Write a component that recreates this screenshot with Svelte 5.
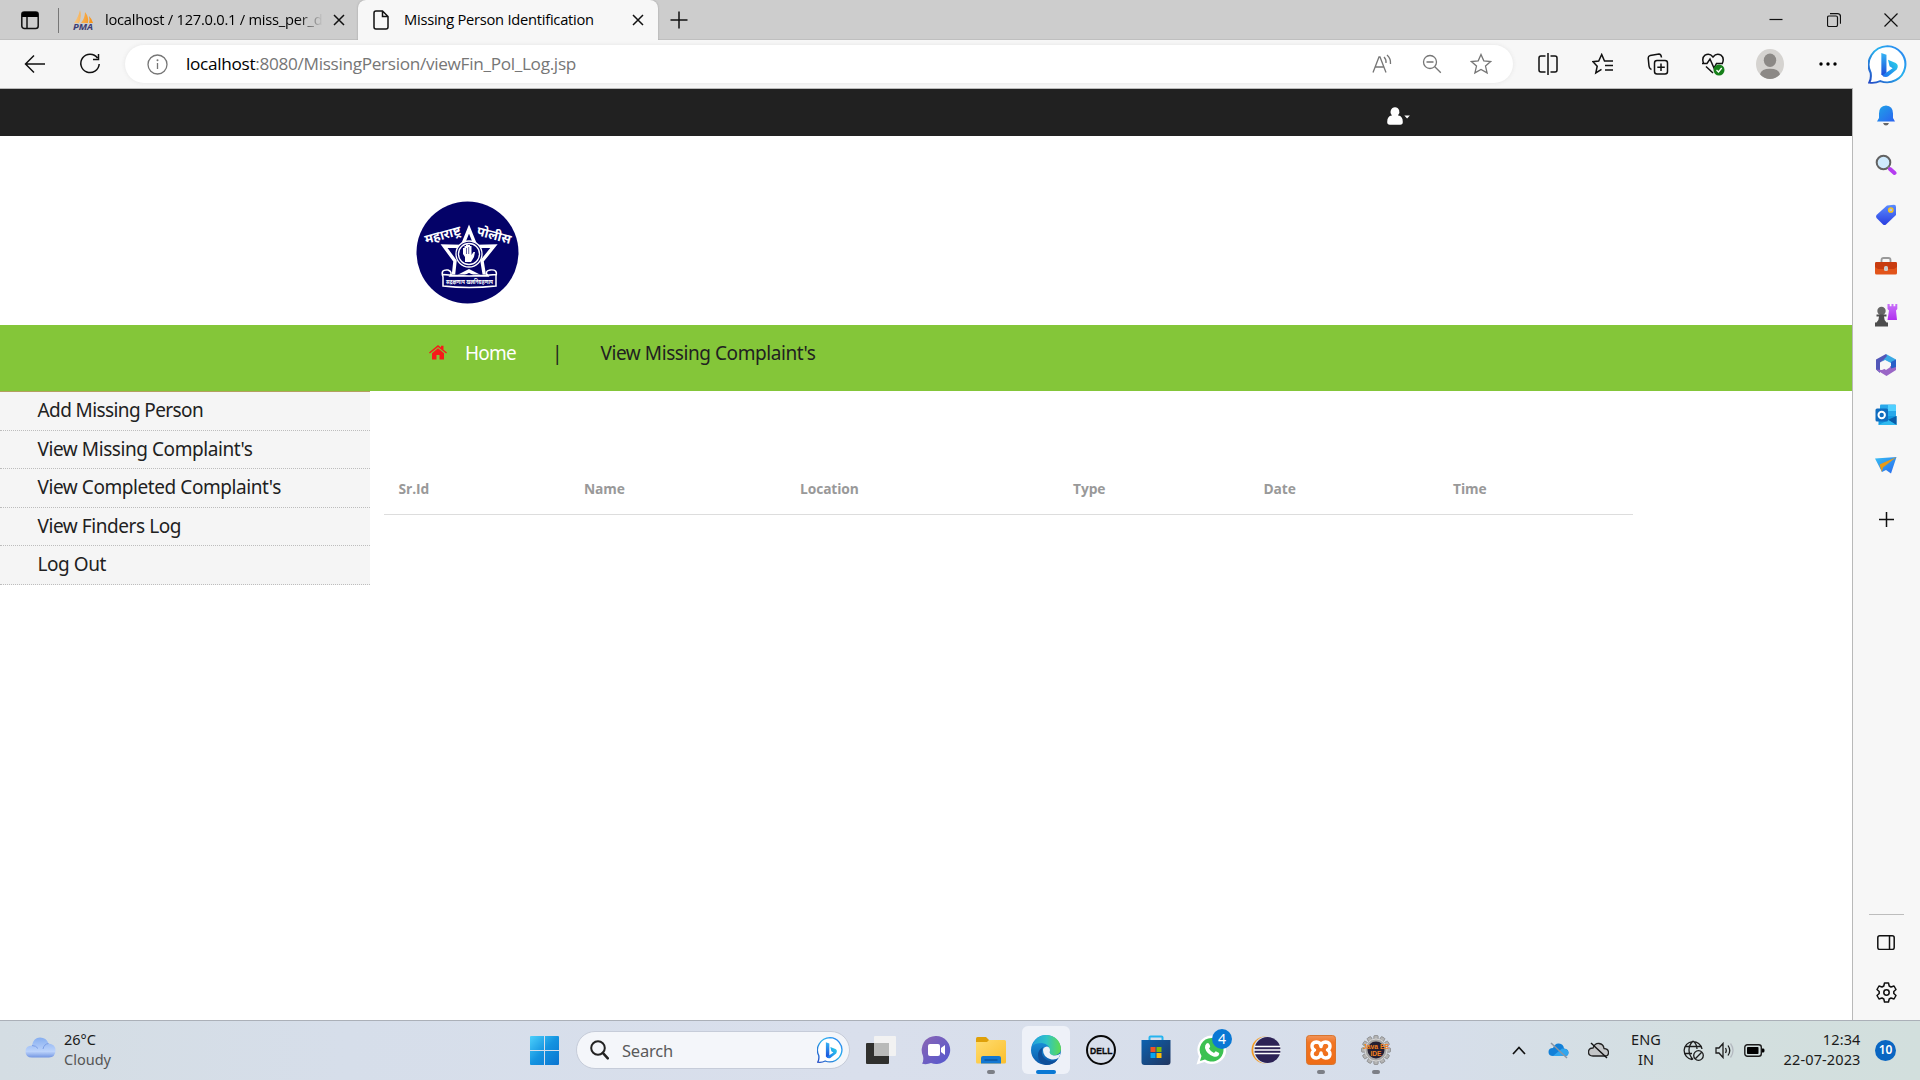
<script>
  const menu = ["Add Missing Person", "View Missing Complaint's", "View Completed Complaint's", "View Finders Log", "Log Out"];
  const columns = ["Sr.Id", "Name", "Location", "Type", "Date", "Time"];
  const rail = ["bing", "bell", "finder", "tag", "toolbox", "games", "m365", "outlook", "drop", "plus"];
  const pinned = [
    { name: "taskview" },
    { name: "chat" },
    { name: "folder", open: true },
    { name: "edge", active: true },
    { name: "dell" },
    { name: "store" },
    { name: "whatsapp", badge: 4 },
    { name: "eclipse" },
    { name: "xampp", open: true },
    { name: "javaee", open: true }
  ];
  const teeth = Array.from({ length: 12 }, (_, i) => i * 30);
</script>

{#snippet bing(size)}
  <svg width={size} height={size} viewBox="0 0 38 42" preserveAspectRatio="none">
    <path d="M19 1.2A17.8 19.5 0 1 1 12 38.8Q7 41.5 1.2 40.6Q3.4 36.5 2.6 30A19 20 0 0 1 19 1.2Z" fill="#fff" stroke="url(#bingRing)" stroke-width="2" />
    <path d="M13 8.5l5 2v19l-2.6 4.6-2.4-2.600z" fill="url(#bingStem)" />
    <path d="M19.5 16l7.5 3.5q3.5 2.5 1 7l-8.5 7.5q-3 1.5-5.5-1.5l10-7.5-3-2z" fill="url(#bingBowl)" />
  </svg>
{/snippet}

{#snippet cross(size)}
  <svg width={size} height={size} viewBox="0 0 12 12"><path d="M1 1l10 10M11 1L1 11" class="ln" /></svg>
{/snippet}

<svg class="defs" width="0" height="0">
  <defs>
    <linearGradient id="bingRing" x1="1" y1="0" x2="0" y2="1"><stop offset="0" stop-color="#2b7cf0" /><stop offset=".45" stop-color="#28b4ee" /><stop offset="1" stop-color="#2348c4" /></linearGradient>
    <linearGradient id="bingStem" x1="0" y1="0" x2="0" y2="1"><stop offset="0" stop-color="#35b5f5" /><stop offset="1" stop-color="#1b46d8" /></linearGradient>
    <linearGradient id="bingBowl" x1="1" y1="0" x2="0" y2="1"><stop offset="0" stop-color="#2bd5e8" /><stop offset="1" stop-color="#1b6cf0" /></linearGradient>
    <linearGradient id="bellFill" x1="0" y1="0" x2="1" y2="1"><stop offset="0" stop-color="#1ea5e8" /><stop offset="1" stop-color="#2b62f0" /></linearGradient>
    <linearGradient id="tagFill" x1="0" y1="0" x2="0" y2="1"><stop offset="0" stop-color="#5a8cff" /><stop offset="1" stop-color="#2a3ee0" /></linearGradient>
    <linearGradient id="winFill" x1="0" y1="0" x2="1" y2="1"><stop offset="0" stop-color="#4cd0fb" /><stop offset=".5" stop-color="#1493e0" /><stop offset="1" stop-color="#0a74d0" /></linearGradient>
    <linearGradient id="cloudFill" x1="0" y1="0" x2="0" y2="1"><stop offset="0" stop-color="#86aef0" /><stop offset=".7" stop-color="#bcd3fb" /><stop offset="1" stop-color="#7396e2" /></linearGradient>
    <linearGradient id="chatFill" x1="0" y1="0" x2="1" y2="1"><stop offset="0" stop-color="#8c66b4" /><stop offset="1" stop-color="#5257cf" /></linearGradient>
    <linearGradient id="folderFill" x1="0" y1="0" x2="1" y2="1"><stop offset="0" stop-color="#ffdc70" /><stop offset="1" stop-color="#fbbf2c" /></linearGradient>
    <linearGradient id="edgeTop" x1="0" y1="0" x2="1" y2="0"><stop offset="0" stop-color="#219fdc" /><stop offset=".5" stop-color="#2fc3c7" /><stop offset="1" stop-color="#5fdc4f" /></linearGradient>
    <linearGradient id="edgeBody" x1="0" y1="0" x2="0" y2="1"><stop offset="0" stop-color="#1ca0e6" /><stop offset="1" stop-color="#0c56a8" /></linearGradient>
    <linearGradient id="storeFill" x1="0" y1="0" x2="1" y2="1"><stop offset="0" stop-color="#0c62b0" /><stop offset="1" stop-color="#213660" /></linearGradient>
    <linearGradient id="xamppFill" x1="0" y1="0" x2="0" y2="1"><stop offset="0" stop-color="#f0945a" /><stop offset=".25" stop-color="#f27421" /><stop offset="1" stop-color="#ee6c16" /></linearGradient>
    <linearGradient id="planeFill" x1="0" y1="0" x2="1" y2="1"><stop offset="0" stop-color="#38c0f4" /><stop offset="1" stop-color="#2766ee" /></linearGradient>
    <linearGradient id="rookFill" x1="0" y1="0" x2="0" y2="1"><stop offset="0" stop-color="#c870fa" /><stop offset="1" stop-color="#b030ee" /></linearGradient>
    <linearGradient id="sailFill" x1="0" y1="0" x2="1" y2="0"><stop offset="0" stop-color="#f6c885" /><stop offset="1" stop-color="#f78f10" /></linearGradient>
  </defs>
</svg>

<div class="screen">
  <header class="tabs">
    <div class="tab-menu">
      <svg width="20" height="20" viewBox="0 0 20 20"><rect x="1.8" y="2" width="16.4" height="16.4" rx="2.5" class="ln" /><path d="M2 7V4q0-2 2-2h12q2 0 2 2v3z" fill="#000" /><path d="M7 7v11" class="ln" /></svg>
    </div>
    <div class="tab idle">
      <svg width="22" height="22" viewBox="0 0 22 22">
        <path d="M8 1q2 6-1 13L2 14q4-5 6-13zM13 3q4 5 3 11H9q4-5 4-11zM17 7q3 3 4 7h-4q1-3 0-7z" fill="url(#sailFill)" />
        <text x="1" y="21" class="pma" textLength="20" lengthAdjust="spacingAndGlyphs">PMA</text>
      </svg>
      <span class="tab-text fade">localhost / 127.0.0.1 / miss_per_d</span>
      {@render cross(12)}
    </div>
    <div class="tab active">
      <svg width="16" height="20" viewBox="0 0 16 20"><path d="M1 3q0-2 2-2h6.5L15 6.500V17q0 2-2 2H3q-2 0-2-2zM9.500 1v5.500H15" class="ln" /></svg>
      <span class="tab-text">Missing Person Identification</span>
      {@render cross(12)}
    </div>
    <svg class="new-tab" width="18" height="18" viewBox="0 0 18 18"><path d="M9 .5v17M.5 9h17" class="ln" /></svg>
    <div class="window">
      <svg width="14" height="14" viewBox="0 0 14 14"><path d="M.5 6.500h13" class="ln thin" /></svg>
      <svg width="14" height="14" viewBox="0 0 14 14"><rect x=".5" y="3" width="10" height="10.500" rx="1.500" class="ln thin" /><path d="M3 .7h7.500q3 0 3 3v7" class="ln thin" /></svg>
      <svg width="14" height="14" viewBox="0 0 14 14"><path d="M.5.5l13 13M13.500.5L.5 13.500" class="ln thin" /></svg>
    </div>
  </header>

  <div class="below">
    <div class="browser">
      <div class="toolbar">
        <div class="btn"><svg width="22" height="20" viewBox="0 0 22 20"><path d="M21 10H1.500M10 1.500L1.500 10l8.500 8.500" class="ln" /></svg></div>
        <div class="btn"><svg width="22" height="22" viewBox="0 0 22 22"><path d="M18.500 5A9.200 9.200 0 1 0 20.200 11M19.500 1v5.500H14" class="ln" /></svg></div>
        <div class="omnibox">
          <svg width="21" height="21" viewBox="0 0 21 21"><circle cx="10.500" cy="10.500" r="9.500" class="ln gray" /><path d="M10.500 9v6" class="ln gray" /><circle cx="10.500" cy="6.300" r="1" fill="#767676" /></svg>
          <span class="url"><b>localhost</b>:8080/MissingPersion/viewFin_Pol_Log.jsp</span>
          <div class="btn"><svg width="20" height="20" viewBox="0 0 20 20"><path d="M1 18.500L7 3h1l6 15.500M3.200 13h8.600M12 3q2.500 2.500 2 6M15 1q4 3.500 3.500 9" class="ln gray" /></svg></div>
          <div class="btn"><svg width="20" height="20" viewBox="0 0 20 20"><circle cx="8" cy="8" r="6.500" class="ln gray" /><path d="M4.500 8h7M12.800 12.800l6 6" class="ln gray" /></svg></div>
          <div class="btn"><svg width="22" height="22" viewBox="0 0 22 22"><path d="M11 1.500l2.800 6.300 6.900.7-5.200 4.600 1.600 6.800L11 16.400l-6.100 3.500 1.600-6.800L1.300 8.500l6.900-.7z" class="ln gray" /></svg></div>
        </div>
        <div class="btn"><svg width="20" height="22" viewBox="0 0 20 22"><path d="M7.500 3H3Q1 3 1 5v12q0 2 2 2h4.500M12.500 3H17q2 0 2 2v12q0 2-2 2h-4.500M10 0v22" class="ln" /></svg></div>
        <div class="btn"><svg width="22" height="22" viewBox="0 0 22 22"><path d="M9.500 16.300l-5.700 3.700 1.400-6.800L1 8.700 6.700 8 9.700 1.500 12.500 8H21M13 12.500h8M13 17h8" class="ln" /></svg></div>
        <div class="btn"><svg width="22" height="22" viewBox="0 0 22 22"><rect x="7.500" y="7.500" width="13" height="13.500" rx="2.500" class="ln" /><path d="M14 10.500v7.500M10.300 14.200h7.500M4.500 16.500Q2.500 16 2 13L1.200 5q0-2 2-2.500L12 1q2 0 2.500 3.500" class="ln" /></svg></div>
        <div class="btn"><svg width="24" height="24" viewBox="0 0 24 24"><path d="M2.500 11Q.5 6 4 3.200 8.500.5 12 5q3.500-4.500 8-1.800 3.500 2.800 1.500 7.800M1 11.500h5L9 7l4 9 2.500-4.500H22M5 14.500l7 6.500" class="ln" /><circle cx="18" cy="18" r="5.500" fill="#16801a" /><path d="M15.500 18l2 2 3.200-4" stroke="#fff" stroke-width="1.300" fill="none" /></svg></div>
        <div class="btn profile"><svg width="28" height="30" viewBox="0 0 28 28" preserveAspectRatio="none"><circle cx="14" cy="14" r="14" fill="#d5d3d0" /><circle cx="14" cy="10.500" r="6.200" fill="#8c8986" /><path d="M4 23.500q1.500-5 10-5t10 5q-4 4.500-10 4.500T4 23.500z" fill="#8c8986" /></svg></div>
        <div class="btn more"><svg width="18" height="4" viewBox="0 0 18 4"><circle cx="2" cy="2" r="1.700" /><circle cx="9" cy="2" r="1.700" /><circle cx="16" cy="2" r="1.700" /></svg></div>
      </div>

      <main>
        <div class="topbar">
          <svg width="24" height="18" viewBox="0 0 24 18"><path d="M8 .3a4.400 4.600 0 0 1 3 8l.3.200q4.500.5 4.500 6.500 0 2.700-2.500 2.700h-10.600Q.2 17.700.2 15q0-6 4.500-6.500l.3-.2a4.400 4.600 0 0 1 3-8zM17.300 8.500h5.600l-2.800 3z" fill="#fff" /></svg>
        </div>
        <div class="brand">
          <svg width="103" height="103" viewBox="0 0 103 103">
            <circle cx="51.500" cy="51.500" r="51" fill="#040268" />
            <g fill="#fff" class="hindi">
              <text transform="translate(10 43) rotate(-15)" font-size="13" textLength="37" lengthAdjust="spacingAndGlyphs">महाराष्ट्र</text>
              <text transform="translate(60 34) rotate(15)" font-size="13" textLength="35" lengthAdjust="spacingAndGlyphs">पोलीस</text>
            </g>
            <path d="M53 28l7 17.500 18-.5-12 15 3 18-16-8-16 8 2-18-11-15 18 .5z" fill="none" stroke="#fff" stroke-width="3.400" />
            <circle cx="53" cy="53" r="13" fill="#040268" stroke="#fff" stroke-width="1.300" />
            <circle cx="53" cy="53" r="10.500" fill="none" stroke="#fff" stroke-width="1.300" />
            <path d="M49 61v-5l-2-3v-6h1.500v-2H50v-1.500h2V44h2v1h1.500v9l2-3h1.500l-1 5-3 5z" fill="#fff" />
            <path d="M50.500 47v6M52.700 46v7" stroke="#040268" stroke-width=".6" />
            <path d="M27 76q-3-8 5-7 5 2 2 6h38q-4-5 2-6 8-1 6 6v10q-27 3-53 0zM27 73.500q26 3 53 0" fill="#040268" stroke="#fff" stroke-width="1.500" />
            <text x="30" y="83" font-size="6.500" fill="#fff" class="hindi" textLength="47" lengthAdjust="spacingAndGlyphs">सद्रक्षणाय खलनिग्रहणाय</text>
          </svg>
        </div>
        <nav>
          <svg width="18" height="15" viewBox="0 0 18 15"><path d="M9 3.300l6 5v6.200h-4.500V10h-3v4.500H3V8.300zM9 0l3 2.500V.7h2.500v4L18 7.600l-.9 1L9 1.900.9 8.600l-.9-1z" fill="#f71a1a" /></svg>
          <span class="home">Home</span>
          <span class="bar">|</span>
          <span>View Missing Complaint's</span>
        </nav>
        <div class="body">
          <ul>
            {#each menu as item}<li>{item}</li>{/each}
          </ul>
          <div class="table">
            {#each columns as column}<span>{column}</span>{/each}
          </div>
        </div>
      </main>
    </div>

    <aside>
      {#each rail as name}
        <div class="rail-slot {name}">
          {#if name === "bing"}
            {@render bing(39)}
          {:else if name === "bell"}
            <svg width="18" height="21" viewBox="0 0 18 21"><path d="M9 .5q7 .5 7 8V13l2 3.500H0L2 13V8.500Q2 1 9 .5z" fill="url(#bellFill)" /><path d="M6 18h6q-1 2.500-3 2.500T6 18z" fill="#666" /></svg>
          {:else if name === "finder"}
            <svg width="22" height="22" viewBox="0 0 22 22"><circle cx="8.500" cy="8.500" r="6.800" fill="#cfeafd" stroke="#626262" stroke-width="2" /><path d="M13 13l2 2" stroke="#888" stroke-width="2" /><path d="M15 15l4.500 4" stroke="#b53cf0" stroke-width="4" stroke-linecap="round" /></svg>
          {:else if name === "tag"}
            <svg width="22" height="22" viewBox="0 0 22 22"><path d="M12 1.500L19 .8q2 0 2 2V11L11 20.500q-1.500 1-3 0L1.500 14q-1-1.500 0-3z" fill="url(#tagFill)" /><circle cx="15.800" cy="6" r="2.100" fill="#a9bcff" stroke="#f7c51d" stroke-width="1.500" /></svg>
          {:else if name === "toolbox"}
            <svg width="24" height="20" viewBox="0 0 24 20"><path d="M7.500 7V5q0-2 2-2h5q2 0 2 2v2" fill="none" stroke="#999" stroke-width="1.800" /><rect x="1" y="7" width="22" height="12.500" rx="1.500" fill="#e2541a" /><path d="M1 8.500Q1 7 2.500 7h19Q23 7 23 8.500V12l-3 2H4l-3-2z" fill="#c83c10" /><rect x="10" y="11" width="4" height="5" rx="1.500" fill="#ccc" /></svg>
          {:else if name === "games"}
            <svg width="24" height="24" viewBox="0 0 24 24"><path d="M13.500 1h2.200v2.200h1.800V1h2v2.200h1.800V1h2v5l-1.300 1.500L23 17h-9.500l1.500-9.500L13.500 6z" fill="url(#rookFill)" /><circle cx="7.500" cy="8" r="4.200" fill="#666" /><path d="M2.500 11.500h10v2H10q0 4 2.500 6h1.500V23.500H1V19.500h1.500q2.500-2 2.500-6H2.500z" fill="#4d4d4d" /></svg>
          {:else if name === "m365"}
            <svg width="22" height="24" viewBox="0 0 22 24"><path d="M11 1L1 6.500v10l4 3.500V9.500L14 4z" fill="#5257b8" /><path d="M11 1l10 5.500V14l-5-4-6-3-3 1.500L12 3z" fill="#3aa9e4" /><path d="M21 8v9l-9.500 6L1 16.500l6 .5 9-4z" fill="#9a66c6" /><path d="M21 6.500V14l-5 1.500V9z" fill="#285fc8" /><path d="M10.500 7.500l4.500 2.800v4l-4 2.700-4-2.700v-4z" fill="#f7f7f7" /></svg>
          {:else if name === "outlook"}
            <svg width="22" height="22" viewBox="0 0 22 22"><rect x="5" y=".5" width="16" height="12" rx="1" fill="#28a8ea" /><path d="M13 1h8v6h-8z" fill="#50d0ff" /><path d="M3.500 12H21.500v9H3.500z" fill="#1499e0" /><path d="M21.500 12v9l-9-5z" fill="#0a5ca8" /><path d="M21.500 21h-18l10-5z" fill="#30baf0" /><rect x=".5" y="4.500" width="12.500" height="13" rx="1.500" fill="#0f6cbf" /><circle cx="6.700" cy="11" r="3.200" fill="none" stroke="#fff" stroke-width="2" /></svg>
          {:else if name === "drop"}
            <svg width="22" height="18" viewBox="0 0 22 18"><path d="M0 2.500L21.500 1 16 17.500l-5-3.500-4 2z" fill="url(#planeFill)" /><path d="M21.500 1L4.500 8.500 6.800 16 8 11.500z" fill="#e99a18" /></svg>
          {:else}
            <svg width="15" height="15" viewBox="0 0 15 15"><path d="M7.500 0v15M0 7.500h15" class="ln" /></svg>
          {/if}
        </div>
      {/each}
      <div class="rail-foot">
        <svg width="18" height="15" viewBox="0 0 18 15"><rect x=".8" y=".8" width="16.400" height="13.600" rx="2" class="ln" /><path d="M12.500 1v13" class="ln" /></svg>
        <svg width="21" height="21" viewBox="0 0 21 21"><path d="M8.500 1h4l.7 3 1.800 1 3-1 2 3.500-2.200 2v2l2.200 2-2 3.500-3-1-1.800 1-.7 3h-4l-.7-3-1.800-1-3 1-2-3.500 2.200-2v-2L1 7.500 3 4l3 1 1.800-1z" class="ln" stroke-linejoin="round" /><circle cx="10.500" cy="10.500" r="2.700" class="ln" /></svg>
      </div>
    </aside>
  </div>

  <footer>
    <div class="weather">
      <svg width="31" height="21" viewBox="0 0 31 21"><path d="M7 20.500q-6.500 0-6.500-6T7 8.500Q8.500.5 15 .5t8.500 6q7 .5 7 7t-6.500 7z" fill="url(#cloudFill)" /><path d="M7 8.500q4 0 6 3M18 12q1-5 5.500-5.500" fill="none" stroke="#7d9fe6" /></svg>
      <div class="lines"><span>26°C</span><span class="dim">Cloudy</span></div>
    </div>
    <svg class="start" width="29" height="29" viewBox="0 0 29 29"><path d="M1 0h13v14H0V1q0-1 1-1zM15 0h13q1 0 1 1v13H15zM0 15h14v14H1q-1 0-1-1zM15 15h14v13q0 1-1 1H15z" fill="url(#winFill)" /></svg>
    <div class="search">
      <svg width="19" height="20" viewBox="0 0 19 20"><circle cx="8" cy="8" r="6.800" fill="none" stroke="#222" stroke-width="2" /><path d="M12.800 12.800l5 5.500" stroke="#222" stroke-width="2.500" stroke-linecap="round" /></svg>
      <span>Search</span>
      {@render bing(26)}
    </div>
    <div class="pins">
      {#each pinned as app}
        <div class="pin" class:active={app.active} class:open={app.open}>
          <svg width="30" height="30" viewBox="0 0 30 30">
            {#if app.name === "taskview"}
              <rect x="0" y="8" width="23" height="21" rx="1" fill="#30302e" /><rect x="8" y="1" width="22" height="20" rx="1" fill="#f2f2f2" /><path d="M8 8h15v13H8z" fill="#b9bab9" />
            {:else if app.name === "chat"}
              <path d="M15 1a14 14 0 1 1-5 27Q5 30 1 28.500 3 26 2 21A14 14 0 0 1 15 1z" fill="url(#chatFill)" /><rect x="7" y="9" width="12" height="12" rx="2" fill="#fff" /><path d="M20 13l4-3v10l-4-3z" fill="#fff" />
            {:else if app.name === "folder"}
              <path d="M0 3.500Q0 2 1.500 2H10l3 3v4H0z" fill="#dfa009" /><path d="M0 7h11l2-2h15.500Q30 5 30 6.500V27q0 1.500-1.500 1.500h-27Q0 28.500 0 27z" fill="url(#folderFill)" /><path d="M5 28.500V23q0-2 2-2h16q2 0 2 2v5.500z" fill="#1478d2" /><path d="M8.500 25h13" stroke="#0b4d91" stroke-width="1.200" />
            {:else if app.name === "edge"}
              <circle cx="15" cy="15" r="15" fill="url(#edgeBody)" /><path d="M1 11Q5 0 15.500 0 28 1 30 13q0 7-7 7.500-5.500-.5-4-3.500Q19 9 11 8 4 8 1 11z" fill="url(#edgeTop)" /><path d="M12 12q-4 10 6 14 5 1.500 9-2Q23 30 15 30 7 28 7 20q0-5 5-8z" fill="#0f4f9a" /><path d="M12 15q0-3 4-3.500 3 .5 3 4-1.500 4 3.500 5 4 .5 7-2l-1.500 4q-4 3-9 1.500-7-2.500-7-9z" fill="#eef1f8" />
            {:else if app.name === "dell"}
              <circle cx="15" cy="15" r="14" fill="none" stroke="#090909" stroke-width="2" /><text x="4" y="18.500" class="dell" textLength="22.500" lengthAdjust="spacingAndGlyphs">DELL</text>
            {:else if app.name === "store"}
              <path d="M8.500 7V2.500q0-1 1-1h11q1 0 1 1V7" fill="none" stroke="#26b4ef" stroke-width="2" /><path d="M.5 5h29v22q0 3-3 3h-23q-3 0-3-3z" fill="url(#storeFill)" /><path d="M9.500 12h5v5h-5z" fill="#f35325" /><path d="M15.500 12h5v5h-5z" fill="#81bc06" /><path d="M9.500 18h5v5h-5z" fill="#05a6f0" /><path d="M15.500 18h5v5h-5z" fill="#ffba08" />
            {:else if app.name === "whatsapp"}
              <path d="M15.500.5A14.300 14.300 0 1 1 8.500 27L.5 29.500 3 21.500A14.300 14.300 0 0 1 15.500.5z" fill="#fff" /><path d="M15.500 3A11.800 11.800 0 1 1 9 24.500L4 26l1.500-5A11.800 11.800 0 0 1 15.500 3z" fill="#3cc152" /><path d="M10.500 8.500q2-1.500 3 1l.7 1.800q0 1-1.200 2.200 1.500 3 5 4.500l1.700-1.700 3 1.400q1.300.8-.2 2.800-2 2-5 1-7-2.500-8.500-8.500-.3-3 1.500-4.500z" fill="#fff" />
            {:else if app.name === "eclipse"}
              <circle cx="14" cy="15" r="13.500" fill="#f79b20" /><circle cx="16" cy="15" r="13.800" fill="#d8dfeb" /><circle cx="16.500" cy="15" r="13" fill="#2c2255" /><path d="M3.500 11.500h26M3 15h27M3.500 18.500h26" stroke="#fff" stroke-width="1.600" />
            {:else if app.name === "xampp"}
              <rect x=".5" y=".5" width="29" height="29" rx="3" fill="url(#xamppFill)" stroke="#d8752f" /><path d="M15 11.500Q14.500 7 10.500 7 6 7.500 6 11q0 3 2.500 4Q6 16 6 19.500q.5 3.500 4.500 3.500 4-.5 4.500-5 .5 4.500 4.500 5 4 0 4.500-3.500 0-3.500-2.500-4.500 2.500-1 2.500-4 0-3.500-4.500-4-4 0-4.500 4.500z" fill="none" stroke="#fff" stroke-width="3.400" stroke-linejoin="round" />
            {:else}
              {#each teeth as angle}<rect x="12.800" y=".5" width="4.400" height="6" rx="1" fill="#b4b4b4" stroke="#777" stroke-width=".6" transform="rotate({angle} 15 15)" />{/each}
              <circle cx="15" cy="15" r="11" fill="#a6a6a6" stroke="#d8d8d8" /><circle cx="15" cy="15" r="8.500" fill="#241f32" />
              <text x="2" y="14" class="java" textLength="26" lengthAdjust="spacingAndGlyphs">Java EE</text><text x="9.500" y="20.500" class="java" textLength="11" lengthAdjust="spacingAndGlyphs">IDE</text>
            {/if}
          </svg>
          {#if app.badge}<span class="badge">{app.badge}</span>{/if}
        </div>
      {/each}
    </div>
    <div class="tray">
      <svg width="14" height="9" viewBox="0 0 14 9"><path d="M1 8l6-6.500L13 8" fill="none" stroke="#111" stroke-width="1.700" /></svg>
      <svg class="drive" width="21" height="17" viewBox="0 0 21 17"><path d="M5 14q-4.500 0-4.500-4T5 6Q7 1 11 1.500q4.500.5 5 5 4.500.5 4.500 4T17 14z" fill="#1380d8" /><path d="M5 14l9-7.500q6 0 6.500 4Q20.500 14 17 14z" fill="#30a5ee" /><path d="M3 1l16 15" stroke="#8b95a3" stroke-width="1.500" /></svg>
      <svg width="21" height="17" viewBox="0 0 21 17"><path d="M5 14q-4.500 0-4.500-4T5 6Q7 1 11 1.500q4.500.5 5 5 4.500.5 4.500 4T17 14z" fill="#c4c6c8" stroke="#222" stroke-width="1.300" /><path d="M3 1l16 15" stroke="#111" stroke-width="1.400" /></svg>
      <div class="lines lang"><span>ENG</span><span>IN</span></div>
      <svg width="21" height="21" viewBox="0 0 21 21"><g fill="none" stroke="#1c1c1c" stroke-width="1.300"><path d="M9 19.500A9 9 0 1 1 19 9M10 1Q6 5 6 10t4 9.500M10 1q4 3 4 8M2 6.500h16M2 13.500h7" /><circle cx="15.500" cy="15.500" r="4.800" /><path d="M12.300 18.700l6.400-6.400" /></g></svg>
      <svg class="speaker" width="20" height="17" viewBox="0 0 20 17"><g fill="none" stroke="#1c1c1c" stroke-width="1.300"><path d="M1 6h3l4-4.500v14L4 11H1zM10.500 6q1.500 2.500 0 5M13 3.500q3.500 5 0 10" /><path d="M15.500 1.500q5 7 0 14" stroke="#b4b9c0" /></g></svg>
      <svg width="21" height="13" viewBox="0 0 21 13"><rect x=".8" y=".8" width="16.500" height="11.400" rx="2.500" fill="none" stroke="#1c1c1c" stroke-width="1.400" /><rect x="3" y="3" width="11.500" height="7" rx=".8" /><path d="M18 4.500h1.500q1 0 1 2t-1 2H18z" /></svg>
      <div class="lines clock"><span>12:34</span><span>22-07-2023</span></div>
      <span class="count">10</span>
    </div>
  </footer>
</div>

<style>
  :global(body) { margin: 0; overflow: hidden; }
  .defs { position: absolute; }
  .screen { width: 1920px; height: 1080px; display: flex; flex-direction: column; background: #fff; font-family: "Open Sans", "Noto Sans", sans-serif; color: #000; white-space: nowrap; }
  svg { display: block; flex: none; }
  .ln { fill: none; stroke: #111; stroke-width: 1.5; }
  .thin { stroke-width: 1.2; }
  .gray { stroke: #767676; stroke-width: 1.3; }

  .tabs { height: 40px; display: flex; align-items: center; background: #cdcdcd; box-shadow: inset 0 -1px #bfbfbf; }
  .tab-menu { width: 59px; height: 25px; box-sizing: border-box; padding-left: 20px; display: flex; align-items: center; border-right: 1px solid #777; }
  .tab { display: flex; align-items: center; height: 40px; box-sizing: border-box; }
  .idle { width: 299px; padding-left: 13px; }
  .idle .tab-text { width: 218px; margin: 0 10px 0 11px; }
  .tab-text { font-size: 14.7px; letter-spacing: -.25px; overflow: hidden; line-height: 22px; padding-bottom: 2px; }
  .fade { mask-image: linear-gradient(90deg, #000 88%, transparent); }
  .active.tab { width: 300px; padding-left: 15px; background: #f7f7f7; border-radius: 8px 8px 0 0; box-shadow: 0 0 2px #999; clip-path: inset(0 -4px 0 -4px); }
  .active .tab-text { width: 218px; margin: 0 10px 0 15px; }
  .new-tab { margin-left: 12px; }
  .window { margin-left: auto; display: flex; gap: 43.5px; padding-right: 22px; }

  .below { height: 980px; display: flex; background: #f7f7f7; }
  .browser { width: 1852px; display: flex; flex-direction: column; }
  .toolbar { height: 48px; display: flex; align-items: center; padding-left: 7px; }
  .btn { width: 55px; flex: none; display: flex; justify-content: center; }
  .profile { width: 60px; }
  .more { width: 55px; }
  .omnibox { width: 1388px; height: 38px; box-sizing: border-box; margin: 0 7px 0 8px; padding: 0 7px 0 22px; display: flex; align-items: center; background: #fff; border-radius: 19px; box-shadow: 0 0 4px #e4e4e4; flex: none; }
  .omnibox .btn { width: 49.5px; }
  .url { flex: 1; margin-left: 18px; padding-bottom: 2px; font-size: 17.2px; letter-spacing: -.31px; color: #767676; }
  .url b { font-weight: 400; color: #000; }

  main { flex: 1; background: #fff; box-shadow: inset 0 1px #b9b9b9; border-right: 1px solid #b9b9b9; margin-right: -1px; }
  .topbar { height: 47px; margin-top: 1px; background: #212121; display: flex; padding: 18px 0 0 1387px; box-sizing: border-box; }
  .brand { height: 189px; box-sizing: border-box; padding: 65px 0 0 416px; }
  .hindi { font-family: "Noto Sans Devanagari", "Noto Sans", sans-serif; font-weight: 700; }
  nav, li { font-family: "Noto Sans", sans-serif; font-size: 19px; letter-spacing: -.43px; color: #212121; }
  nav { height: 66px; box-sizing: border-box; padding: 15px 0 0 429px; display: flex; align-items: flex-start; background: #84c639; line-height: 26px; }
  nav svg { margin-top: 5px; }
  .home { width: 87px; margin-left: 18px; color: #fff; letter-spacing: -.8px; }
  .bar { width: 48.5px; }
  .body { display: flex; align-items: flex-start; }
  ul { width: 370px; margin: 0; padding: 0; list-style: none; background: #f5f5f5; border-top: 1px solid #b3a05f; box-sizing: border-box; }
  li { height: 38.6px; box-sizing: border-box; padding-left: 37.5px; border-bottom: 1px dotted #bdbdbd; line-height: 36px; }
  li:first-child { letter-spacing: -.6px; }
  .table { width: 1249px; height: 124px; box-sizing: border-box; margin-left: 14px; padding: 88px 0 0 14.500px; display: grid; grid-template-columns: 185.5px 216px 273px 190.5px 189.5px 1fr; border-bottom: 1px solid #ddd; color: #999; font-size: 13.8px; font-weight: 700; line-height: 20px; letter-spacing: -.1px; }

  aside { flex: 1; display: flex; flex-direction: column; align-items: center; }
  .rail-slot { height: 50px; display: flex; align-items: center; justify-content: center; flex: none; }
  .rail-slot.bing { box-sizing: border-box; padding: 0 0 2px 2px; }
  .rail-slot.plus { height: 58px; }
  .rail-foot { width: 35px; margin-top: auto; margin-bottom: 17px; padding-top: 20px; display: flex; flex-direction: column; align-items: center; gap: 32px; border-top: 1px solid #bdbdbd; }

  footer { height: 60px; box-sizing: border-box; padding-bottom: 1px; display: flex; align-items: center; border-top: 1px solid #abb0b8; background: linear-gradient(90deg, #d4dde3, #d6deea 18%, #d9dfec 45%, #d6deea 75%, #d3dfdf 90%, #d2dfdd); font-family: "Noto Sans", sans-serif; font-size: 14.5px; line-height: 20px; color: #1b1b1b; }
  .weather { width: 505px; padding-left: 25px; display: flex; align-items: center; gap: 8px; }
  .lines { display: flex; flex-direction: column; padding-bottom: 3px; }
  .weather svg { margin-top: -6px; }
  .weather .dim { color: #555; }
  .start { margin-right: 17px; }
  .search { width: 274px; height: 38px; box-sizing: border-box; padding: 0 6px 0 13px; display: flex; align-items: center; border-radius: 19px; background: #f4f6fa; border: 1px solid #c6ccd9; font-size: 16.5px; letter-spacing: -.2px; color: #5a5a5a; }
  .search span { flex: 1; margin-left: 13px; padding-top: 1px; }
  .pins { display: flex; margin-left: 7px; gap: 7px; }
  .pin { position: relative; width: 48px; height: 48px; display: flex; align-items: center; justify-content: center; border-radius: 6px; }
  .pin.active { background: #eef1f8; }
  .pin.active::after, .pin.open::after { content: ""; position: absolute; bottom: 0; width: 20px; height: 4px; border-radius: 2px; background: #0a78d4; }
  .pin.open::after { width: 8px; background: #7c7f86; }
  .badge { position: absolute; left: 25px; top: 3px; width: 20px; height: 20px; border-radius: 50%; background: #0a78d4; color: #fff; text-align: center; font-size: 14px; }
  .pma { font: italic 700 8px "Open Sans", sans-serif; fill: #3b3c73; }
  .dell { font: 700 9.5px "Liberation Sans", sans-serif; fill: #090909; stroke: #090909; stroke-width: .3; }
  .java { font: 700 7px "Liberation Sans", sans-serif; fill: #f58220; }
  .tray { margin-left: auto; display: flex; align-items: center; padding-right: 24px; }
  .drive { margin: 0 19px 0 22.500px; }
  .lang { width: 74px; align-items: center; letter-spacing: .1px; }
  .speaker { margin: 0 9.500px 0 10.500px; }
  .clock { width: 95.5px; align-items: flex-end; letter-spacing: .12px; }
  .count { width: 21px; height: 21px; margin-left: 14.5px; border-radius: 50%; background: #0a66c2; color: #fff; text-align: center; font-size: 12px; font-weight: 600; }
</style>
